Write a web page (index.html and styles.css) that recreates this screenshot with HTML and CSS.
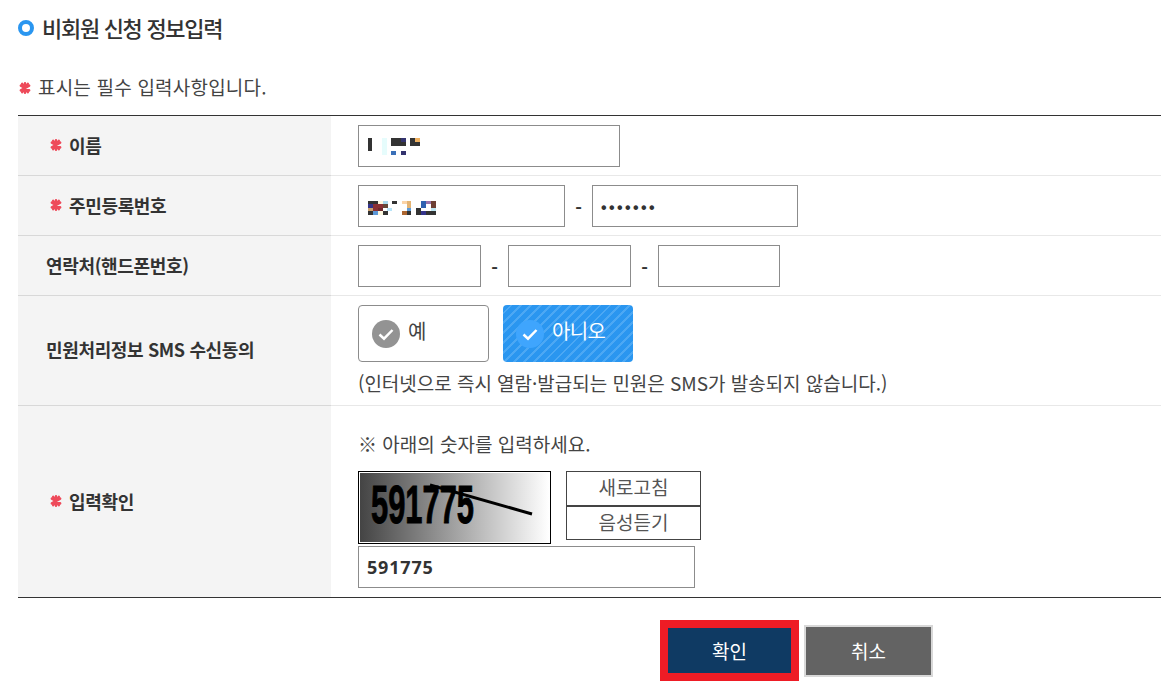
FILE: index.html
```html
<!DOCTYPE html>
<html lang="ko">
<head>
<meta charset="utf-8">
<title>비회원 신청 정보입력</title>
<link rel="stylesheet" href="styles.css">
</head>
<body>
<svg class="defs" width="0" height="0" aria-hidden="true">
  <symbol id="star" viewBox="0 0 12 12">
    <g stroke="#ee4a5a" stroke-width="2.4" stroke-linecap="round">
      <path d="M6 1.2v9.6M1.8 3.6l8.4 4.8M1.8 8.4l8.4-4.8M3.2 1.8l5.6 8.4M8.8 1.8l-5.6 8.4"/>
    </g>
  </symbol>
</svg>
<main class="page">
  <h2 class="title"><span class="ring"></span>비회원 신청 정보입력</h2>
  <p class="notice"><svg class="star"><use href="#star"/></svg>표시는 필수 입력사항입니다.</p>
  <form class="form">
    <div class="row row-1">
      <div class="label"><svg class="star"><use href="#star"/></svg>이름</div>
      <div class="value">
        <div class="field w-262">
          <svg class="mosaic" width="60" height="20" viewBox="368 136 60 20">
            <rect x="368" y="137" width="4" height="13" fill="#333"/>
            <rect x="382" y="137" width="5" height="17" fill="#e6fcfc"/>
            <rect x="391" y="137" width="15" height="8" fill="#333"/>
            <rect x="401" y="137" width="5" height="4" fill="#33336e"/>
            <rect x="391" y="150" width="5" height="4" fill="#3a70b8"/>
            <rect x="401" y="150" width="5" height="4" fill="#33336e"/>
            <rect x="410" y="137" width="10" height="8" fill="#333"/>
            <rect x="415" y="137" width="5" height="4" fill="#eeb060"/>
          </svg>
        </div>
      </div>
    </div>
    <div class="row row-1">
      <div class="label"><svg class="star"><use href="#star"/></svg>주민등록번호</div>
      <div class="value">
        <div class="field w-207">
          <svg class="mosaic mosaic-low" width="70" height="14" viewBox="368 201 70 14">
            <rect x="368" y="201" width="10" height="3" fill="#333"/>
            <rect x="378" y="201" width="5" height="3" fill="#fdf8e0"/>
            <rect x="383" y="201" width="5" height="3" fill="#a8d8ec"/>
            <rect x="392" y="201" width="5" height="3" fill="#333"/>
            <rect x="402" y="201" width="5" height="3" fill="#fbd4a8"/>
            <rect x="407" y="201" width="4" height="7" fill="#e4b474"/>
            <rect x="421" y="201" width="5" height="7" fill="#2f62b0"/>
            <rect x="426" y="201" width="5" height="3" fill="#9a74ac"/>
            <rect x="431" y="201" width="5" height="7" fill="#6e4034"/>
            <rect x="368" y="204" width="5" height="4" fill="#33338a"/>
            <rect x="373" y="204" width="10" height="4" fill="#8a3034"/>
            <rect x="383" y="204" width="5" height="4" fill="#644838"/>
            <rect x="368" y="208" width="5" height="3" fill="#c9a070"/>
            <rect x="373" y="208" width="5" height="3" fill="#8a3034"/>
            <rect x="378" y="208" width="5" height="3" fill="#702a2e"/>
            <rect x="387" y="208" width="5" height="3" fill="#b8e4f8"/>
            <rect x="407" y="208" width="4" height="3" fill="#5c9ad8"/>
            <rect x="416" y="208" width="5" height="7" fill="#333"/>
            <rect x="431" y="208" width="5" height="3" fill="#c0e8f4"/>
            <rect x="368" y="211" width="5" height="4" fill="#333"/>
            <rect x="373" y="211" width="5" height="4" fill="#5c98d8"/>
            <rect x="378" y="211" width="5" height="4" fill="#fdf8e0"/>
            <rect x="383" y="211" width="5" height="4" fill="#333"/>
            <rect x="402" y="211" width="5" height="4" fill="#ac6630"/>
            <rect x="407" y="211" width="4" height="4" fill="#333"/>
            <rect x="421" y="211" width="5" height="4" fill="#33338a"/>
            <rect x="426" y="211" width="10" height="4" fill="#333"/>
          </svg>
        </div>
        <span class="dash">-</span>
        <input class="field w-206 secret" type="text" value="•••••••">
      </div>
    </div>
    <div class="row row-1">
      <div class="label label-plain">연락처(핸드폰번호)</div>
      <div class="value">
        <input class="field w-123" type="text">
        <span class="dash">-</span>
        <input class="field w-123" type="text">
        <span class="dash">-</span>
        <input class="field w-122" type="text">
      </div>
    </div>
    <div class="row row-sms">
      <div class="label label-plain label-sms">민원처리정보 SMS 수신동의</div>
      <div class="value value-stack">
        <div class="choices">
          <div class="choice">
            <svg class="check" width="28" height="28" viewBox="0 0 28 28"><circle cx="14" cy="14" r="14" fill="#939393"/><path d="M7.5 14.5l4.5 4.2L20.5 10" fill="none" stroke="#fff" stroke-width="2.5"/></svg>
            <span>예</span>
          </div>
          <div class="choice choice-on">
            <svg class="check" width="28" height="28" viewBox="0 0 28 28"><circle cx="14" cy="14" r="14" fill="#3fa5fd"/><path d="M7.5 14.5l4.5 4.2L20.5 10" fill="none" stroke="#fff" stroke-width="2.5"/></svg>
            <span>아니오</span>
          </div>
        </div>
        <p class="hint">(인터넷으로 즉시 열람·발급되는 민원은 SMS가 발송되지 않습니다.)</p>
      </div>
    </div>
    <div class="row row-captcha">
      <div class="label"><svg class="star"><use href="#star"/></svg>입력확인</div>
      <div class="value value-stack">
        <p class="prompt">※ 아래의 숫자를 입력하세요.</p>
        <div class="captcha-line">
          <svg class="captcha" width="193" height="73" viewBox="0 0 193 73">
            <defs><linearGradient id="cg"><stop offset="0" stop-color="#444"/><stop offset="1" stop-color="#fff"/></linearGradient></defs>
            <rect width="193" height="73" fill="#000"/>
            <rect x="1" y="1" width="191" height="71" fill="#fff"/>
            <rect x="2" y="2" width="189" height="69" fill="url(#cg)"/>
            <text class="captcha-text" x="13" y="52" textLength="103" lengthAdjust="spacingAndGlyphs">591775</text>
            <path d="M72 14L174 43" stroke="#000" stroke-width="3"/>
          </svg>
          <div class="captcha-btns">
            <button type="button" class="cap-btn">새로고침</button>
            <button type="button" class="cap-btn">음성듣기</button>
          </div>
        </div>
        <input class="field w-337 answer" type="text" value="591775">
      </div>
    </div>
  </form>
  <div class="actions">
    <button type="button" class="btn btn-ok">확인</button>
    <button type="button" class="btn btn-cancel">취소</button>
  </div>
</main>
</body>
</html>
```
FILE: styles.css
```css
* { box-sizing: border-box; }
html, body { margin: 0; padding: 0; background: #fff; overflow: hidden; }
body {
  font-family: "Noto Sans CJK KR", "Noto Sans", sans-serif;
  color: #333;
  width: 1161px;
  height: 695px;
}
.defs { position: absolute; }
.page { padding: 0 0 0 18px; }
.title {
  margin: 0;
  height: 58px;
  padding-bottom: 4px;
  display: flex;
  align-items: center;
  gap: 8px;
  font-size: 22px;
  font-weight: 500;
  letter-spacing: -1.3px;
  color: #333;
}
.ring {
  width: 16px;
  height: 16px;
  margin-top: 2px;
  border: 4px solid #2a96f0;
  border-radius: 50%;
  background: #fff;
}
.notice {
  margin: 0;
  height: 57px;
  display: flex;
  align-items: center;
  font-size: 19px;
  line-height: 27px;
  letter-spacing: 0.2px;
  color: #444;
}
.notice .star { margin: 2px 7px 0 1px; }
.star { width: 12px; height: 12px; flex: none; }
.form {
  border-top: 1px solid #333;
  border-bottom: 1px solid #333;
}
.row {
  display: flex;
  border-bottom: 1px solid #e8e8e8;
  position: relative;
}
.row:last-child { border-bottom: 0; }
.row-1 { height: 60px; }
.row-sms { height: 110px; }
.row-captcha { height: 191px; }
.label {
  width: 313px;
  flex: none;
  display: flex;
  align-items: center;
  gap: 7px;
  padding: 0 0 2px 32px;
  background: #f4f4f4;
  box-shadow: 0 1px 0 #d8d8d8;
  font-size: 18px;
  font-weight: 700;
  letter-spacing: -0.35px;
  color: #333;
}
.row:last-child .label { box-shadow: none; }
.label-plain { padding-left: 28px; }
.label-sms { padding-bottom: 4px; }
.value {
  flex: 1;
  display: flex;
  align-items: flex-start;
  padding: 9px 0 0 27px;
}
.value-stack { flex-direction: column; }
.field {
  display: block;
  height: 42px;
  border: 1px solid #8c8c8c;
  background: #fff;
  padding: 0 8px;
  font-family: inherit;
  font-size: 18px;
  color: #333;
  border-radius: 0;
  outline: 0;
}
.w-262 { width: 262px; }
.w-207 { width: 207px; }
.w-206 { width: 206px; }
.w-123 { width: 123px; }
.w-122 { width: 122px; }
.w-337 { width: 337px; }
.mosaic { display: block; margin: 11px 0 0 1px; }
.mosaic-low { margin-top: 15px; }
.secret {
  padding-top: 3px;
  font-size: 16px;
  font-family: "Liberation Sans", sans-serif;
  font-weight: 700;
  letter-spacing: 2.4px;
}
.dash {
  width: 27px;
  height: 42px;
  line-height: 44px;
  text-align: center;
  font-size: 18px;
  font-weight: 700;
}
.choices { display: flex; gap: 14px; }
.choice {
  width: 131px;
  height: 57px;
  border: 1px solid #8c8c8c;
  border-radius: 4px;
  background: #fff;
  display: flex;
  align-items: center;
  gap: 8px;
  padding-left: 13px;
  font-size: 20px;
  line-height: 1;
  color: #444;
}
.choice span { margin-top: -6px; }
.choice-on {
  width: 130px;
  padding-left: 13px;
  border: 0;
  background: repeating-linear-gradient(135deg, #2a96f0 0 5px, #4ca8f4 5px 7px);
  color: #fff;
  gap: 8px;
  letter-spacing: -0.7px;
}
.check { flex: none; }
.hint {
  margin: 7px 0 0;
  font-size: 19px;
  line-height: 27px;
  letter-spacing: -0.03px;
  color: #444;
  white-space: nowrap;
}
.prompt {
  margin: 15px 0 14px;
  font-size: 19px;
  line-height: 27px;
  letter-spacing: 0;
  color: #444;
}
.captcha-line { display: flex; gap: 15px; }
.captcha { display: block; }
.captcha-text {
  font-family: "Liberation Sans", sans-serif;
  font-weight: 700;
  font-size: 54px;
  fill: #000;
  stroke: #000;
  stroke-width: 1px;
}
.captcha-btns { display: flex; flex-direction: column; }
.cap-btn {
  width: 135px;
  height: 35px;
  margin: 0;
  padding: 0 0 4px;
  border: 1px solid #444;
  background: #fff;
  font-family: inherit;
  font-size: 19px;
  color: #555;
  line-height: 1;
}
.cap-btn + .cap-btn { margin-top: -1px; border-top-width: 2px; }
.answer {
  margin-top: 2px;
  font-weight: 700;
  font-family: "Noto Sans", sans-serif;
  letter-spacing: 0.8px;
}
.actions {
  display: flex;
  align-items: center;
  gap: 5px;
  padding: 22px 0 0 642px;
}
.btn {
  margin: 0;
  padding: 0;
  font-family: inherit;
  font-size: 19px;
  color: #fff;
  border-radius: 0;
}
.btn-ok {
  width: 139px;
  height: 61px;
  border: 8px solid #ee1c25;
  background: #0f3a63;
}
.btn-cancel {
  width: 129px;
  height: 52px;
  border: 2px solid #d8d8d8;
  background: #636363;
}
```
